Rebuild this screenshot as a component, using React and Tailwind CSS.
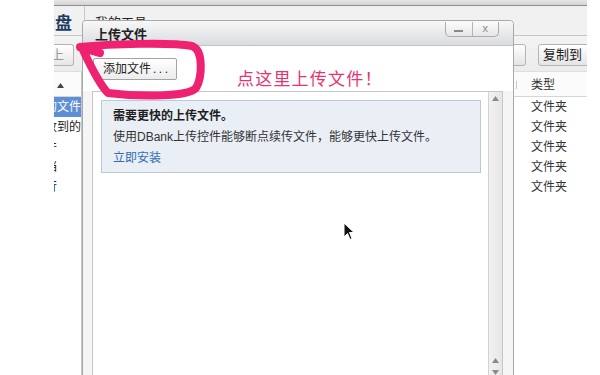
import React from 'react';

const leftItems = ['我的文件', '我收到的', '文件', '文档', '流行'];

const Arrow = ({ down }) => (
    <div className="h-[12px] flex items-center justify-center">
        <svg width="7" height="5" viewBox="0 0 7 5">
            <path d={down ? 'M0 0 L7 0 L3.5 5 Z' : 'M0 5 L7 5 L3.5 0 Z'} fill="#8a8a8a" />
        </svg>
    </div>
);

export default function App() {
    return (
        <div className="relative w-[600px] h-[375px] overflow-hidden bg-white font-['Liberation_Sans','Noto_Sans_CJK_SC',sans-serif] text-[12px] text-[#333]">
            {/* App window behind the dialog */}
            <div className="flex h-full">
                <div className="w-[54px] shrink-0" />
                <div className="w-[533px] shrink-0 overflow-hidden">
                    <div className="w-[560px]">
                        <div className="h-[6px] bg-gradient-to-b from-[#e6e6e6] to-[#d4d4d4] border-b border-[#8f8f8f]" />
                        {/* title row */}
                        <div className="h-[30px] flex bg-[#f1f1f1] border-b border-[#c6c6c6]">
                            <div className="w-[31px] shrink-0 overflow-hidden border-r border-[#c9c9c9] flex justify-end pr-[12px] pt-[8px]">
                                <span className="shrink-0 whitespace-nowrap text-[17px] leading-[20px] font-bold text-[#1d3b63]">华为网盘</span>
                            </div>
                            <div className="pl-[10px] pt-[9px] text-[13px] leading-[16px] text-[#222]">我的工具</div>
                        </div>
                        {/* toolbar */}
                        <div className="h-[35px] flex items-start pt-[8px] bg-gradient-to-b from-[#f3f3f3] to-[#ececec]">
                            <div className="w-[20px] h-[22px] shrink-0 overflow-hidden flex justify-end items-center pr-[9px] rounded-r-[3px] border border-l-0 border-[#b4b4b4] bg-gradient-to-b from-white to-[#e6e6e6]">
                                <span className="shrink-0 whitespace-nowrap text-[13px] text-[#9a9a9a]">向上</span>
                            </div>
                            <div className="flex-1" />
                            <div className="w-[101px] shrink-0 flex">
                                <div className="w-[56px] h-[22px] shrink-0 -ml-[43px] rounded-[3px] border border-[#b4b4b4] bg-gradient-to-b from-white to-[#e4e4e4]" />
                                <div className="w-[56px] h-[22px] shrink-0 ml-[12px] rounded-[3px] border border-[#b4b4b4] bg-gradient-to-b from-white to-[#e4e4e4] flex items-center pl-[4px] text-[13px] text-[#222]">复制到</div>
                            </div>
                        </div>
                        {/* header row */}
                        <div className="h-[26px] flex bg-[#fbfbfb] border-t border-[#dedede] border-b border-b-[#d6d6d6]">
                            <div className="w-[28px] shrink-0 border-r border-[#c4c4c4] flex items-center pl-[3px] pt-[2px]">
                                <svg width="7" height="5" viewBox="0 0 7 5"><path d="M0 5 L7 5 L3.5 0 Z" fill="#444" /></svg>
                            </div>
                            <div className="flex-1" />
                            <div className="w-[101px] shrink-0 flex items-center pl-[3px] pt-[2px]">
                                <div className="w-px h-[8px] bg-[#c8c8c8]" />
                                <span className="ml-[14px]">类型</span>
                            </div>
                        </div>
                        {/* list rows */}
                        {leftItems.map((name, i) => (
                            <div key={name} className="h-[20px] flex">
                                <div className={`w-[28px] shrink-0 overflow-hidden border-r border-[#c4c4c4] flex items-center ${i === 0 ? 'bg-[#5e8fd6] text-white' : 'text-[#222]'}`}>
                                    <span className="shrink-0 whitespace-nowrap -ml-[21px]">{name}</span>
                                </div>
                                <div className="flex-1" />
                                <div className="w-[101px] shrink-0 flex items-center pl-[18px]">文件夹</div>
                            </div>
                        ))}
                        <div className="h-[200px] flex">
                            <div className="w-[28px] shrink-0 border-r border-[#c4c4c4]" />
                        </div>
                    </div>
                </div>
            </div>

            {/* Upload dialog */}
            <div className="absolute left-[82px] top-[20px] w-[432px] h-[370px] flex flex-col border border-[#a9a9a9] rounded-t-[4px] bg-white">
                <div className="h-[25px] shrink-0 flex items-start justify-between border-b border-[#c2c2c2] bg-gradient-to-b from-[#f8f8f8] to-[#dadce0] rounded-t-[4px]">
                    <span className="ml-[12px] mt-[6px] text-[13px] leading-[16px] font-bold text-[#222]">上传文件</span>
                    <div className="mr-[14px] mt-[1px] w-[54px] h-[15px] flex rounded-b-[5px] border border-t-0 border-[#acacac] bg-gradient-to-b from-[#fbfbfb] to-[#e6e6e6]">
                        <div className="flex-1 flex items-end justify-center pb-[4px] border-r border-[#b4b4b4]">
                            <div className="w-[9px] h-[2px] bg-[#8a8a8a]" />
                        </div>
                        <div className="flex-1 flex items-center justify-center text-[11px] leading-none text-[#8a8a8a] pb-[2px]">x</div>
                    </div>
                </div>
                <div className="h-[45px] shrink-0 flex items-start pl-[10px] pt-[12px]">
                    <div className="w-[84px] h-[22px] flex items-center pl-[9px] rounded-[2px] border border-[#a3a3a3] bg-gradient-to-b from-white to-[#ececec] text-[12px] text-[#222]">
                        添加文件<span className="tracking-[2.5px] ml-[2px]">...</span>
                    </div>
                    <span className="ml-[60px] mt-[10px] text-[17px] leading-[20px] tracking-[1.2px] text-[#e8336f] font-['Noto_Sans_CJK_SC',sans-serif]">点这里上传文件！</span>
                </div>
                <div className="flex-1 flex pl-[9px] pr-[10px] bg-[#f5f5f5]">
                    <div className="flex-1 flex border border-[#c6c6c6] bg-white">
                        <div className="flex-1 pl-[8px] pr-[7px] pt-[8px]">
                            <div className="h-[73px] border border-[#b9cade] bg-[#eaeff6] pl-[11px] pt-[5px] leading-[21px]">
                                <div className="font-bold text-[#1e1e1e]">需要更快的上传文件。</div>
                                <div className="text-[#333]">使用DBank上传控件能够断点续传文件，能够更快上传文件。</div>
                                <div className="text-[#2f6db5]">立即安装</div>
                            </div>
                        </div>
                        <div className="w-[14px] shrink-0 flex flex-col border-l border-[#d2d2d2] bg-gradient-to-r from-[#f2f2f2] to-[#e6e6e6]">
                            <Arrow />
                            <div className="h-[250px]" />
                            <Arrow />
                            <Arrow down />
                        </div>
                    </div>
                </div>
            </div>

            {/* Hand-drawn annotation loop */}
            <svg className="absolute left-0 top-0 pointer-events-none" width="600" height="375" viewBox="0 0 600 375">
                <path
                    d="M80 47 C110 44 170 42 192 46 C204 50 202 78 196 88 C188 97 140 97 108 93 C100 85 90 65 83 50 C82 47 88 50 100 53"
                    fill="none"
                    stroke="#ee2270"
                    strokeWidth="8"
                    strokeLinecap="round"
                    strokeLinejoin="round"
                />
            </svg>

            {/* Mouse cursor */}
            <svg className="absolute left-[343px] top-[222px] pointer-events-none" width="13" height="20" viewBox="0 0 13 20">
                <path d="M1 1 L1 15 L4.5 11.5 L7 17.5 L9 16.5 L6.5 10.5 L11 10.5 Z" fill="#111" stroke="#fff" strokeWidth="1" strokeLinejoin="round" />
            </svg>
        </div>
    );
}
